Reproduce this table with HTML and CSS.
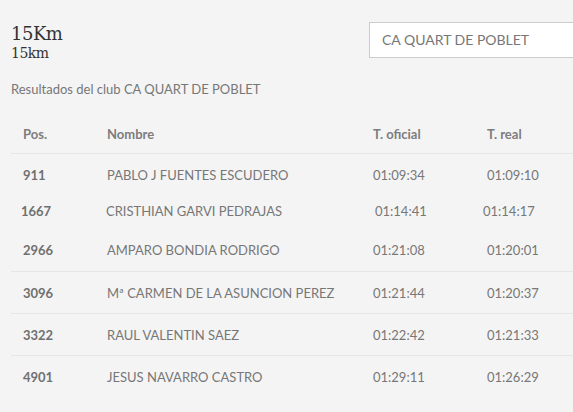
FILE: index.html
```html
<!DOCTYPE html>
<html lang="es">
<head>
<meta charset="utf-8">
<link rel="stylesheet" href="styles.css">
</head>
<body>
<div class="page">
  <div class="top">
    <div class="titles">
      <h1 class="title">15Km</h1>
      <h2 class="subtitle">15km</h2>
    </div>
    <div class="search">CA QUART DE POBLET</div>
  </div>
  <p class="club">Resultados del club CA QUART DE POBLET</p>
  <div class="results">
    <div class="row head">
      <span>Pos.</span><span>Nombre</span><span>T. oficial</span><span>T. real</span>
    </div>
    <div class="row r1">
      <span class="pos">911</span><span>PABLO J FUENTES ESCUDERO</span><span>01:09:34</span><span>01:09:10</span>
    </div>
    <div class="row r2">
      <span class="pos">1667</span><span>CRISTHIAN GARVI PEDRAJAS</span><span>01:14:41</span><span>01:14:17</span>
    </div>
    <div class="row r3">
      <span class="pos">2966</span><span>AMPARO BONDIA RODRIGO</span><span>01:21:08</span><span>01:20:01</span>
    </div>
    <div class="row lined">
      <span class="pos">3096</span><span>Mª CARMEN DE LA ASUNCION PEREZ</span><span>01:21:44</span><span>01:20:37</span>
    </div>
    <div class="row lined">
      <span class="pos">3322</span><span>RAUL VALENTIN SAEZ</span><span>01:22:42</span><span>01:21:33</span>
    </div>
    <div class="row lined">
      <span class="pos">4901</span><span>JESUS NAVARRO CASTRO</span><span>01:29:11</span><span>01:26:29</span>
    </div>
  </div>
</div>
</body>
</html>
```

FILE: styles.css
```css
html, body {
  margin: 0;
  padding: 0;
  overflow: hidden;
  background: #f4f4f4;
}
body {
  font-family: "Source Sans Pro", Lato, "Open Sans", sans-serif;
  color: #777;
}
.page {
  padding: 0 0 0 11px;
  width: 600px;
}
.top {
  display: grid;
  grid-template-columns: 358px 1fr;
  align-items: start;
  padding-top: 22px;
}
.titles {
  padding-top: 1px;
}
.title {
  margin: 0;
  font-family: "DejaVu Serif", serif;
  font-weight: normal;
  font-size: 18px;
  line-height: 22px;
  color: #333;
  letter-spacing: -0.5px;
}
.subtitle {
  margin: 0;
  font-family: "DejaVu Serif", serif;
  font-weight: normal;
  font-size: 14px;
  line-height: 16px;
  color: #333;
  letter-spacing: -0.5px;
}
.search {
  box-sizing: border-box;
  height: 36px;
  border: 1px solid #ccc;
  background: #fff;
  padding: 0 12px;
  font-size: 14px;
  line-height: 34px;
  color: #777;
}
.club {
  margin: 19px 0 0;
  font-size: 13px;
  line-height: 18px;
  color: #777;
}
.results {
  margin-top: 17px;
  font-size: 13px;
}
.row {
  display: grid;
  grid-template-columns: 84px 266px 114px 1fr;
  padding-left: 12px;
  height: 42px;
  align-items: center;
  box-sizing: border-box;
}
.head {
  height: 39px;
  font-weight: bold;
  color: #7d7d7d;
  border-bottom: 1px solid #e6e6e6;
}
.pos {
  font-weight: bold;
  color: #707070;
}
.r2 {
  height: 30px;
}
.r2 span:nth-child(1) { margin-left: -2px; }
.r2 span:nth-child(2) { margin-left: -1px; }
.r2 span:nth-child(3) { margin-left: 2px; }
.r2 span:nth-child(4) { margin-left: -4px; }
.r3 {
  margin-top: 3px;
}
.lined {
  border-top: 1px solid #e6e6e6;
}
```
